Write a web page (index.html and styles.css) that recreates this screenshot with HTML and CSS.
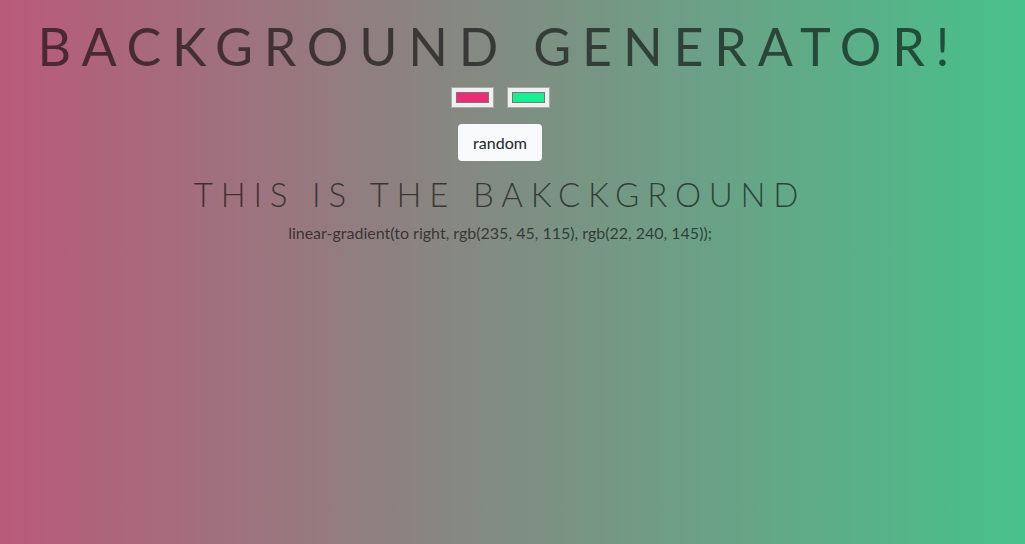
FILE: index.html
```html
<!DOCTYPE html>
<html>
<head>
<meta charset="utf-8">
<title>Background Generator</title>
<link rel="stylesheet" href="styles.css">
</head>
<body>
<main class="page">
  <h1 class="title">BACKGROUND GENERATOR!</h1>
  <div class="pickers">
    <span class="picker"><span class="swatch swatch-pink"></span></span>
    <span class="picker"><span class="swatch swatch-green"></span></span>
  </div>
  <button class="random">random</button>
  <h3 class="subtitle">THIS IS THE BAKCKGROUND</h3>
  <p class="css">linear-gradient(to right, rgb(235, 45, 115), rgb(22, 240, 145));</p>
</main>
</body>
</html>
```
FILE: styles.css
```css
html, body {
  margin: 0;
  height: 100%;
}
body {
  background: linear-gradient(to right, #b95a7a, #47c18b);
  font-family: Lato, "Open Sans", sans-serif;
  overflow: hidden;
}
.page {
  width: 1000px;
  text-align: center;
  display: flex;
  flex-direction: column;
  align-items: center;
}
.title {
  margin: 12px 0 0;
  font-size: 52px;
  line-height: 68px;
  font-weight: 400;
  letter-spacing: 10.8px;
  padding-right: 2px;
  color: rgba(0, 0, 0, 0.58);
}
.pickers {
  margin-top: 7px;
  display: flex;
  gap: 13px;
}
.picker {
  width: 43px;
  height: 21px;
  box-sizing: border-box;
  background: #efefef;
  border: 1px solid #a9a9a9;
  display: flex;
  align-items: center;
  justify-content: center;
}
.swatch {
  width: 33px;
  height: 11px;
  box-sizing: border-box;
  border: 1px solid #777;
}
.swatch-pink { background: #eb2d73; }
.swatch-green { background: #16f091; }
.random {
  margin-top: 16px;
  width: 84px;
  height: 37px;
  background: #f8f9fa;
  border: none;
  border-radius: 4px;
  font-family: Lato, sans-serif;
  font-size: 16px;
  color: #212529;
  padding: 0;
}
.subtitle {
  margin: 13px 0 0;
  font-size: 33px;
  line-height: 40px;
  font-weight: 300;
  letter-spacing: 7.8px;
  padding-right: 0;
  color: rgba(0, 0, 0, 0.6);
}
.css {
  margin: 9px 0 0;
  font-size: 16px;
  line-height: 20px;
  color: rgba(0, 0, 0, 0.62);
}
```
